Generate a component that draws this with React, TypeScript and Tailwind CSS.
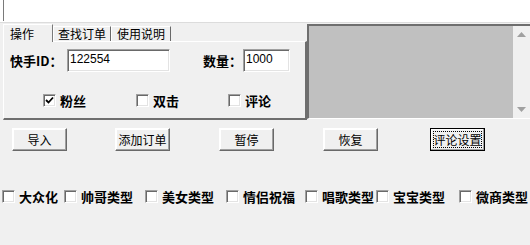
import React from "react";

const cjk = { fontFamily: '"Noto Sans CJK SC", "Liberation Sans", sans-serif' };

function CheckBox({ checked = false }: { checked?: boolean }) {
    return (
        <div className="w-[13px] h-[13px] shrink-0 bg-white border border-t-[#a0a0a0] border-l-[#a0a0a0] border-b-white border-r-white shadow-[inset_1px_1px_0_#696969,inset_-1px_-1px_0_#e3e3e3] flex items-center justify-center">
            {checked && (
                <svg width="9" height="9" viewBox="0 0 9 9">
                    <path d="M1 4 L3.5 6.5 L8 1.5" stroke="#000" strokeWidth="1.8" fill="none" />
                </svg>
            )}
        </div>
    );
}

function Option({ label, checked = false, width }: { label: string; checked?: boolean; width: string }) {
    return (
        <div className={`flex items-center ${width}`}>
            <CheckBox checked={checked} />
            <span className="ml-[4px] text-[13px] font-bold leading-none text-black whitespace-nowrap">{label}</span>
        </div>
    );
}

function Field({ value, width }: { value: string; width: string }) {
    return (
        <div
            className={`${width} h-[23px] bg-white border border-t-[#a0a0a0] border-l-[#a0a0a0] border-b-white border-r-white shadow-[inset_1px_1px_0_#696969,inset_-1px_-1px_0_#e3e3e3] pl-[2px] pt-[2px] text-[12px] leading-[14px] text-black`}
            style={{ fontFamily: '"Liberation Sans", sans-serif' }}
        >
            {value}
        </div>
    );
}

function Btn({ label, className = "", focused = false }: { label: string; className?: string; focused?: boolean }) {
    return (
        <div
            className={`w-[55px] h-[23px] bg-[#f0f0f0] border ${
                focused ? "border-[#000]" : "border-t-white border-l-white border-b-[#696969] border-r-[#696969]"
            } shadow-[inset_-1px_-1px_0_#a0a0a0,inset_1px_1px_0_#fff] flex items-center justify-center ${className}`}
        >
            <div
                className={`flex items-center justify-center px-[1px] ${
                    focused ? "border border-dotted border-black h-[17px] w-[49px]" : ""
                }`}
            >
                <span className="text-[12px] leading-none text-black whitespace-nowrap">{label}</span>
            </div>
        </div>
    );
}

export default function App() {
    return (
        <div className="w-[530px] h-[245px] bg-[#f0f0f0] overflow-hidden select-none" style={cjk}>
            {/* top text area */}
            <div className="h-[23px] bg-white border-b border-[#dcdcdc]">
                <div className="ml-[3px] h-[21px] border-l border-[#7a7a7a]" />
            </div>

            <div className="flex mt-[1px]">
                {/* tab control */}
                <div className="ml-[3px] w-[304px]">
                    <div className="flex items-end h-[17px]">
                        <div className="relative z-10 -mb-px w-[50px] h-[18px] bg-[#f0f0f0] border-t border-l border-white border-r border-r-[#7a7a7a] pl-[6px] pt-[3px] text-[12px] leading-[12px] text-black">
                            操作
                        </div>
                        <div className="w-[58px] h-[15px] border-t border-l border-white border-r border-r-[#696969] flex items-center justify-center text-[12px] leading-[12px] text-black">
                            查找订单
                        </div>
                        <div className="w-[60px] h-[15px] border-t border-l border-white border-r border-r-[#696969] flex items-center justify-center text-[12px] leading-[12px] text-black">
                            使用说明
                        </div>
                    </div>
                    <div className="h-[79px] border-t border-l border-white border-r-2 border-b-2 border-r-[#6e6e6e] border-b-[#6e6e6e]">
                        <div className="flex items-center pt-[7px] pl-[6px]">
                            <div className="w-[57px] text-[13px] font-bold leading-none text-black">快手ID：</div>
                            <Field value="122554" width="w-[103px]" />
                            <div className="w-[33px]" />
                            <div className="w-[40px] text-[13px] font-bold leading-none text-black">数量：</div>
                            <Field value="1000" width="w-[47px]" />
                        </div>
                        <div className="flex items-center mt-[22px] pl-[39px]">
                            <Option label="粉丝" checked width="w-[93px]" />
                            <Option label="双击" width="w-[92px]" />
                            <Option label="评论" width="w-[60px]" />
                        </div>
                    </div>
                </div>

                {/* gray list box */}
                <div className="flex-1 h-[95px] bg-[#c0c0c0] border-t-2 border-l-2 border-[#6e6e6e] border-b border-b-white flex justify-end">
                    <div className="w-[17px] h-full bg-[#f0f0f0] flex flex-col items-center justify-between py-[6px]">
                        <svg width="9" height="5" viewBox="0 0 9 5">
                            <path d="M0 5 L4.5 0 L9 5 Z" fill="#a0a0a0" />
                        </svg>
                        <svg width="9" height="5" viewBox="0 0 9 5">
                            <path d="M0 0 L4.5 5 L9 0 Z" fill="#a0a0a0" />
                        </svg>
                    </div>
                </div>
            </div>

            {/* buttons */}
            <div className="flex mt-[8px]">
                <Btn label="导入" className="ml-[12px]" />
                <Btn label="添加订单" className="ml-[48px]" />
                <Btn label="暂停" className="ml-[49px]" />
                <Btn label="恢复" className="ml-[49px]" />
                <Btn label="评论设置" className="ml-[52px]" focused />
            </div>

            {/* type options */}
            <div className="flex items-center mt-[39px] pl-[2px]">
                <Option label="大众化" width="w-[62px]" />
                <Option label="帅哥类型" width="w-[81px]" />
                <Option label="美女类型" width="w-[81px]" />
                <Option label="情侣祝福" width="w-[79px]" />
                <Option label="唱歌类型" width="w-[71px]" />
                <Option label="宝宝类型" width="w-[83px]" />
                <Option label="微商类型" width="w-[70px]" />
            </div>
        </div>
    );
}
